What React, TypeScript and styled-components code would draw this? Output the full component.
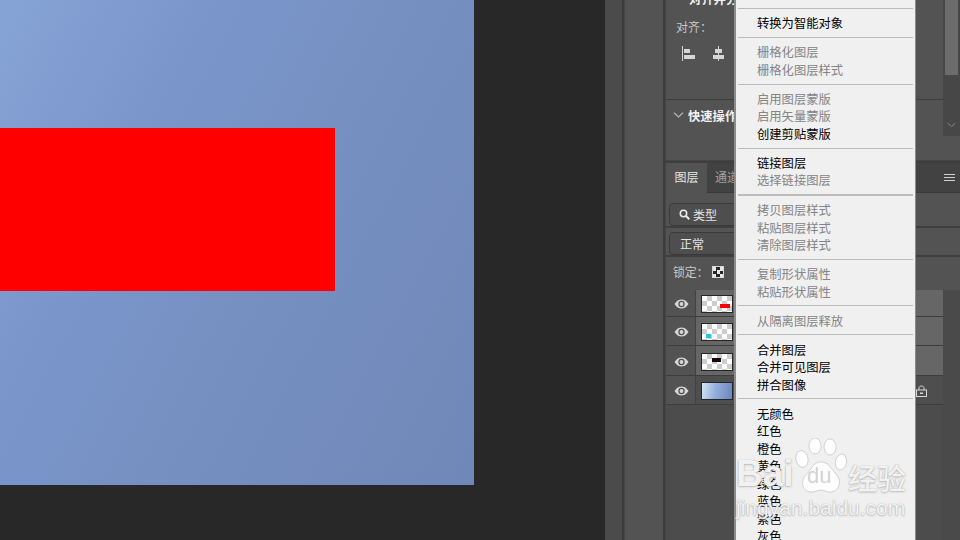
import React from "react";
import styled, { createGlobalStyle } from "styled-components";

const Global = createGlobalStyle`
  html, body { margin: 0; padding: 0; background: #282828; }
  body { font-family: "Noto Sans CJK SC", "Liberation Sans", sans-serif; }
`;

const Page = styled.div`
  position: relative;
  width: 960px;
  height: 540px;
  overflow: hidden;
  display: flex;
  background: #282828;
`;

/* Canvas area */
const Canvas = styled.div`
  position: relative;
  width: 605px;
  flex: none;
  background: #282828;
`;
const Artboard = styled.div`
  position: relative;
  width: 474px;
  height: 485px;
  background: linear-gradient(118deg, #87a4d6 0%, #7a96cb 28%, #7690c1 55%, #7088b8 100%);
`;
const RedShape = styled.div`
  position: absolute;
  left: 0;
  top: 128px;
  width: 335px;
  height: 163px;
  background: #ff0000;
`;

/* Docks */
const Strip = styled.div<{ $w: number; $bg: string }>`
  flex: none;
  width: ${(p) => p.$w}px;
  background: ${(p) => p.$bg};
`;
const Gutter = styled.div`
  flex: none;
  width: 3px;
  background: #3c3c3c;
  border-right: 1px solid #464646;
  box-sizing: border-box;
`;

const Dock = styled.div`
  flex: 1;
  min-width: 0;
  display: flex;
  flex-direction: column;
  background: #4c4c4c;
`;

/* Properties panel */
const Props = styled.div`
  height: 160px;
  flex: none;
  display: flex;
  background: #535353;
  overflow: hidden;
`;
const PropsBody = styled.div`
  flex: 1;
  min-width: 0;
  display: flex;
  flex-direction: column;
`;
const AlignSection = styled.div`
  height: 100px;
  flex: none;
  box-sizing: border-box;
  border-bottom: 1px solid #3d3d3d;
  padding-left: 10px;
  overflow: hidden;
`;
const SectionTitle = styled.div`
  font-size: 12.3px;
  line-height: 16px;
  font-weight: 700;
  color: #f0f0f0;
  white-space: nowrap;
`;
const ClippedTitle = styled(SectionTitle)`
  margin: -9px 0 0 13px;
`;
const AlignLabel = styled.div`
  font-size: 12px;
  line-height: 16px;
  color: #c8c8c8;
  margin-top: 12px;
`;
const AlignIcons = styled.div`
  display: flex;
  gap: 17px;
  margin: 11px 0 0 6px;
  color: #d6d6d6;
`;
const QuickSection = styled.div`
  flex: 1;
  display: flex;
  align-items: flex-start;
  gap: 4px;
  padding: 8px 0 0 7px;
`;
const ChevronSlot = styled.span`
  color: #b5b5b5;
  margin-top: 3px;
  line-height: 0;
`;
const Scroll = styled.div`
  flex: none;
  width: 17px;
  height: 136px;
  box-sizing: border-box;
  padding: 0 2px;
  background: #474747;
  display: flex;
  flex-direction: column;
  align-items: center;
`;
const ScrollThumb = styled.div`
  width: 13px;
  height: 75px;
  flex: none;
  background: #6c6c6c;
`;
const ScrollArrow = styled.div`
  margin-top: 46px;
  color: #8d8d8d;
  line-height: 0;
`;

/* Layers panel */
const PanelRule = styled.div`
  height: 3px;
  flex: none;
  background: #3e3e3e;
  border-top: 1px solid #454545;
  box-sizing: border-box;
`;
const Tabs = styled.div`
  height: 30px;
  flex: none;
  display: flex;
  background: #424242;
  border-bottom: 1px solid #383838;
  box-sizing: border-box;
`;
const Tab = styled.div<{ $active?: boolean }>`
  width: ${(p) => (p.$active ? 41 : 40)}px;
  box-sizing: border-box;
  font-size: 12px;
  line-height: 28px;
  text-align: center;
  color: ${(p) => (p.$active ? "#e6e6e6" : "#a4a4a4")};
  background: ${(p) => (p.$active ? "#535353" : "transparent")};
  margin-bottom: ${(p) => (p.$active ? "-1px" : "0")};
`;
const TabSpacer = styled.div`
  flex: 1;
`;
const MenuGlyph = styled.div`
  width: 11px;
  margin: 11px 5px 0 0;
  color: #d0d0d0;
  line-height: 0;
`;
const ControlRow = styled.div<{ $h: number; $top: number }>`
  height: ${(p) => p.$h}px;
  flex: none;
  box-sizing: border-box;
  background: #535353;
  padding: ${(p) => p.$top}px 0 0 3px;
  border-bottom: 2px solid #3f3f3f;
`;
const Field = styled.div<{ $pad: number }>`
  width: 120px;
  height: 23px;
  box-sizing: border-box;
  border: 1px solid #3a3a3a;
  border-radius: 4px;
  background: #4e4e4e;
  display: flex;
  align-items: center;
  gap: 3px;
  padding-left: ${(p) => p.$pad}px;
  font-size: 12px;
  color: #e4e4e4;
`;
const LockRow = styled.div`
  height: 33px;
  flex: none;
  background: #535353;
  display: flex;
  align-items: center;
  padding: 0 0 4px 7px;
  box-sizing: border-box;
  font-size: 12px;
  color: #c8c8c8;
`;
const LockLabel = styled.span`
  width: 39px;
  flex: none;
  letter-spacing: -0.2px;
`;
const Checker = styled.div`
  width: 10px;
  height: 10px;
  border: 0.5px solid #d8d8d8;
  background: repeating-conic-gradient(#262626 0 25%, #e8e8e8 0 50%) 0 0 / 7px 7px;
`;
const LayersBody = styled.div`
  flex: 1;
  display: flex;
  background: #4c4c4c;
`;
const LayerList = styled.div`
  flex: 1;
  min-width: 0;
  display: flex;
  flex-direction: column;
  background: #4c4c4c;
`;
const LayerRow = styled.div<{ $h: number; $on?: boolean }>`
  height: ${(p) => p.$h}px;
  flex: none;
  display: flex;
  box-sizing: border-box;
  border-bottom: 1px solid #3d3d3d;
  background: ${(p) => (p.$on ? "#666666" : "#4e4e4e")};
`;
const EyeCell = styled.div<{ $nudge: number }>`
  width: 30px;
  flex: none;
  display: flex;
  align-items: center;
  justify-content: center;
  background: #535353;
  border-right: 1px solid #424242;
  box-sizing: border-box;
  color: #d8d8d8;
  padding: ${(p) => p.$nudge}px 0 0 2px;
`;
const ThumbCell = styled.div<{ $nudge: number }>`
  flex: 1;
  display: flex;
  align-items: center;
  padding: ${(p) => p.$nudge}px 0 0 5px;
  position: relative;
`;
const Thumb = styled.div<{ $plain?: boolean }>`
  position: relative;
  width: 32px;
  height: 18px;
  box-sizing: border-box;
  border: 1px solid #262626;
  background: ${(p) =>
    p.$plain
      ? "linear-gradient(100deg, #d6e6f6 0%, #94aedc 45%, #6d86bb 100%)"
      : "repeating-conic-gradient(#cdcdcd 0 25%, #ffffff 0 50%) 0 0 / 10px 10px"};
`;
const Mark = styled.div<{ $l: number; $t: number; $w: number; $c: string }>`
  position: absolute;
  left: ${(p) => p.$l}px;
  top: ${(p) => p.$t}px;
  width: ${(p) => p.$w}px;
  height: 4px;
  background: ${(p) => p.$c};
`;
const LockMark = styled.div`
  position: absolute;
  right: 16px;
  top: 9px;
  color: #d8d8d8;
  line-height: 0;
`;
const LayerScroll = styled.div`
  flex: none;
  width: 17px;
  background: #4a4a4a;
`;

/* Context menu */
const Menu = styled.div`
  position: absolute;
  left: 734px;
  top: 0;
  width: 182px;
  height: 540px;
  box-sizing: border-box;
  border-left: 2px solid #8b8b8b;
  border-right: 1px solid #8b8b8b;
  background: #f0f0f0;
  overflow: hidden;
`;
const MenuList = styled.div`
  margin-top: -13.75px;
`;
const Item = styled.div<{ $off?: boolean }>`
  height: 17.5px;
  line-height: 17.7px;
  padding-left: 21px;
  font-size: 12.3px;
  white-space: nowrap;
  color: ${(p) => (p.$off ? "#848484" : "#000000")};
`;
const Sep = styled.div<{ $thick?: boolean }>`
  height: ${(p) => (p.$thick ? 2 : 1)}px;
  margin: 4.25px 2px ${(p) => (p.$thick ? 6 : 6.25)}px 2px;
  background: #bcbcbc;
`;

/* Watermark */
const Mark2 = styled.div`
  position: absolute;
  left: 736px;
  top: 436px;
  width: 180px;
  color: rgba(255, 255, 255, 0.9);
  text-shadow: 0 0 1px rgba(125, 125, 125, 0.75), 0 1px 2px rgba(150, 150, 150, 0.5);
  font-family: "Liberation Sans", sans-serif;
  pointer-events: none;
`;
const MarkTop = styled.div`
  display: flex;
  align-items: flex-end;
  height: 58px;
`;
const MarkBai = styled.div`
  font-size: 37px;
  line-height: 36px;
  font-weight: 700;
  width: 59px;
  margin-bottom: 2px;
`;
const Paw = styled.div`
  position: relative;
  width: 52px;
  height: 56px;
  flex: none;
`;
const PawText = styled.div`
  position: absolute;
  left: 12px;
  top: 25px;
  font-size: 22px;
  line-height: 26px;
  color: rgba(205, 205, 205, 0.9);
  text-shadow: none;
`;
const MarkCn = styled.div`
  margin-left: 1px;
  font-family: "Noto Sans CJK SC", sans-serif;
  font-size: 29px;
  line-height: 34px;
  font-weight: 500;
  white-space: nowrap;
`;
const MarkUrl = styled.div`
  font-size: 21px;
  line-height: 24px;
  margin-top: 2px;
  white-space: nowrap;
`;

const Eye = () => (
  <svg width="15" height="10" viewBox="0 0 15 10">
    <path d="M0.5 5C3 1.3 5.2 0.5 7.5 0.5S12 1.3 14.5 5C12 8.7 9.8 9.5 7.5 9.5S3 8.7 0.5 5Z" fill="currentColor" />
    <circle cx="7.5" cy="5" r="3.2" fill="#535353" />
    <circle cx="7.5" cy="5" r="1.9" fill="currentColor" />
  </svg>
);
const AlignLeft = () => (
  <svg width="13" height="16" viewBox="0 0 13 16" fill="currentColor">
    <rect x="0" y="0" width="1" height="15" />
    <rect x="2" y="3" width="6" height="4" />
    <rect x="2" y="9" width="11" height="4" />
  </svg>
);
const AlignCenter = () => (
  <svg width="13" height="16" viewBox="0 0 13 16" fill="currentColor">
    <rect x="6" y="0" width="1" height="15" />
    <rect x="3" y="3" width="7" height="4" />
    <rect x="1" y="9" width="11" height="4" />
  </svg>
);
const Chevron = ({ w = 11 }: { w?: number }) => (
  <svg width={w} height="6" viewBox="0 0 11 6" fill="none" stroke="currentColor" strokeWidth="1.2">
    <path d="M1 0.8L5.5 5L10 0.8" />
  </svg>
);
const Search = () => (
  <svg width="11" height="11" viewBox="0 0 11 11" fill="none" stroke="#e8e8e8">
    <circle cx="4.5" cy="4.5" r="3.2" strokeWidth="1.6" />
    <path d="M7 7L10.3 10.3" strokeWidth="2" />
  </svg>
);
const Burger = () => (
  <svg width="11" height="7" viewBox="0 0 11 7" fill="currentColor">
    <rect y="0" width="11" height="1" />
    <rect y="3" width="11" height="1" />
    <rect y="6" width="11" height="1" />
  </svg>
);
const Padlock = () => (
  <svg width="11" height="12" viewBox="0 0 11 12" fill="none" stroke="currentColor">
    <path d="M3 5V3.2C3 1.8 4 1 5.5 1S8 1.8 8 3.2V5" />
    <rect x="0.5" y="5" width="10" height="6.5" />
    <rect x="4" y="7.5" width="3" height="1.5" fill="currentColor" stroke="none" />
  </svg>
);
const PawShape = () => (
  <svg width="52" height="56" viewBox="0 0 52 56" fill="currentColor" stroke="rgba(130,130,130,.45)" strokeWidth="0.7">
    <ellipse cx="7" cy="21" rx="6" ry="8.5" transform="rotate(-12 7 21)" />
    <ellipse cx="20" cy="8" rx="6" ry="8" />
    <ellipse cx="35" cy="9" rx="6" ry="8" />
    <ellipse cx="46" cy="24" rx="5.5" ry="8" transform="rotate(12 46 24)" />
    <path d="M26 24C34 24 36 31 41 36C47 42 45 54 35 54C31 54 29 52 26 52S20 54 16 54C7 54 5 43 11 37C17 31 18 24 26 24Z" />
  </svg>
);

type Row = string | { off: string };
const groups: { items: Row[]; thick?: boolean }[] = [
  { items: [{ off: "来自图层组" }] },
  { items: ["转换为智能对象"] },
  { items: [{ off: "栅格化图层" }, { off: "栅格化图层样式" }] },
  { items: [{ off: "启用图层蒙版" }, { off: "启用矢量蒙版" }, "创建剪贴蒙版"] },
  { items: ["链接图层", { off: "选择链接图层" }], thick: true },
  { items: [{ off: "拷贝图层样式" }, { off: "粘贴图层样式" }, { off: "清除图层样式" }] },
  { items: [{ off: "复制形状属性" }, { off: "粘贴形状属性" }] },
  { items: [{ off: "从隔离图层释放" }] },
  { items: ["合并图层", "合并可见图层", "拼合图像"] },
  { items: ["无颜色", "红色", "橙色", "黄色", "绿色", "蓝色", "紫色", "灰色"] },
];

export default function App() {
  return (
    <Page>
      <Global />
      <Canvas>
        <Artboard>
          <RedShape />
        </Artboard>
      </Canvas>
      <Strip $w={17} $bg="#4b4b4b" />
      <Gutter />
      <Strip $w={38} $bg="#535353" />
      <Gutter />
      <Dock>
        <Props>
          <PropsBody>
            <AlignSection>
              <ClippedTitle>对齐并分布</ClippedTitle>
              <AlignLabel>对齐：</AlignLabel>
              <AlignIcons>
                <AlignLeft />
                <AlignCenter />
              </AlignIcons>
            </AlignSection>
            <QuickSection>
              <ChevronSlot>
                <Chevron />
              </ChevronSlot>
              <SectionTitle>快速操作</SectionTitle>
            </QuickSection>
          </PropsBody>
          <Scroll>
            <ScrollThumb />
            <ScrollArrow>
              <Chevron w={9} />
            </ScrollArrow>
          </Scroll>
        </Props>
        <PanelRule />
        <Tabs>
          <Tab $active>图层</Tab>
          <Tab>通道</Tab>
          <TabSpacer />
          <MenuGlyph>
            <Burger />
          </MenuGlyph>
        </Tabs>
        <ControlRow $h={35} $top={10}>
          <Field $pad={9}>
            <Search />
            类型
          </Field>
        </ControlRow>
        <ControlRow $h={29} $top={4}>
          <Field $pad={10}>正常</Field>
        </ControlRow>
        <LockRow>
          <LockLabel>锁定：</LockLabel>
          <Checker />
        </LockRow>
        <LayersBody>
          <LayerList>
            <LayerRow $h={27} $on>
              <EyeCell $nudge={2}>
                <Eye />
              </EyeCell>
              <ThumbCell $nudge={1}>
                <Thumb>
                  <Mark $l={18} $t={8} $w={10} $c="#ff0000" />
                </Thumb>
              </ThumbCell>
            </LayerRow>
            <LayerRow $h={29} $on>
              <EyeCell $nudge={2}>
                <Eye />
              </EyeCell>
              <ThumbCell $nudge={2}>
                <Thumb>
                  <Mark $l={4} $t={10} $w={5} $c="#25c4ea" />
                </Thumb>
              </ThumbCell>
            </LayerRow>
            <LayerRow $h={30} $on>
              <EyeCell $nudge={3}>
                <Eye />
              </EyeCell>
              <ThumbCell $nudge={2}>
                <Thumb>
                  <Mark $l={10} $t={4} $w={9} $c="#1a0808" />
                </Thumb>
              </ThumbCell>
            </LayerRow>
            <LayerRow $h={29}>
              <EyeCell $nudge={2}>
                <Eye />
              </EyeCell>
              <ThumbCell $nudge={2}>
                <Thumb $plain />
                <LockMark>
                  <Padlock />
                </LockMark>
              </ThumbCell>
            </LayerRow>
          </LayerList>
          <LayerScroll />
        </LayersBody>
      </Dock>
      <Menu>
        <MenuList>
          {groups.map((g, i) => (
            <React.Fragment key={i}>
              {g.items.map((it) =>
                typeof it === "string" ? (
                  <Item key={it}>{it}</Item>
                ) : (
                  <Item key={it.off} $off>
                    {it.off}
                  </Item>
                )
              )}
              {i < groups.length - 1 && <Sep $thick={g.thick} />}
            </React.Fragment>
          ))}
        </MenuList>
      </Menu>
      <Mark2>
        <MarkTop>
          <MarkBai>Bai</MarkBai>
          <Paw>
            <PawShape />
            <PawText>du</PawText>
          </Paw>
          <MarkCn>经验</MarkCn>
        </MarkTop>
        <MarkUrl>jingyan.baidu.com</MarkUrl>
      </Mark2>
    </Page>
  );
}
